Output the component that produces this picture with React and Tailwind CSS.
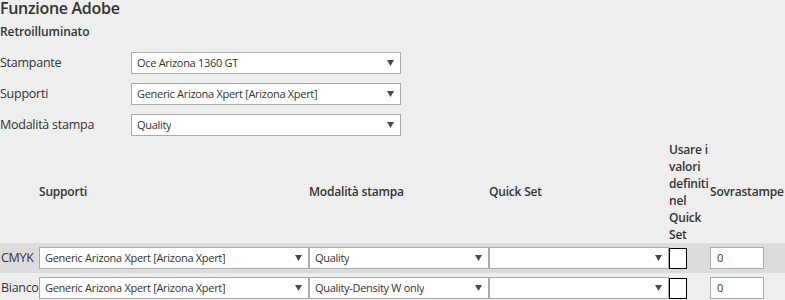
import React from 'react';

const font = { fontFamily: '"Open Sans", "Noto Sans", sans-serif' };

const Arrow = () => (
  <svg width="7" height="6" viewBox="0 0 7 6" className="shrink-0">
    <polygon points="0,0 7,0 3.5,6" fill="#4a4a4a" />
  </svg>
);

const FakeSelect = ({ value, width }) => (
  <div className={`flex h-[22px] shrink-0 items-center justify-between border border-[#a9a9a9] bg-white pl-[5px] pr-[6px] ${width}`}>
    <span className="truncate text-[11px] tracking-[-0.3px] text-[#333]">{value}</span>
    <Arrow />
  </div>
);

const FormRow = ({ label, value }) => (
  <div className="flex h-[22px] items-center">
    <span className="w-[131px] shrink-0 text-[12.5px] tracking-[-0.25px] text-[#333]">{label}</span>
    <FakeSelect value={value} width="w-[270px]" />
  </div>
);

const TableRow = ({ label, media, mode, band }) => (
  <div className={`flex h-[30px] items-center ${band ? 'bg-[#dcdcdc]' : ''}`}>
    <span className="w-[39px] shrink-0 pl-px text-[12.5px] tracking-[-0.3px] text-[#333]">{label}</span>
    <FakeSelect value={media} width="w-[270px]" />
    <FakeSelect value={mode} width="w-[180px]" />
    <FakeSelect value="" width="w-[180px]" />
    <div className="w-[41px] shrink-0">
      <div className="h-[21px] w-[18px] border border-black bg-white" />
    </div>
    <div className="flex h-[22px] w-[54px] shrink-0 items-center border border-[#a9a9a9] bg-white pl-[6px] text-[11px] text-[#333]">
      0
    </div>
  </div>
);

export default function App() {
  return (
    <div className="h-[300px] w-[785px] overflow-hidden bg-[#eeeeee] text-[#333]" style={font}>
      <h2 className="-mt-[2px] text-[16px] font-semibold leading-[20px] tracking-[-0.3px]">Funzione Adobe</h2>
      <h3 className="mt-[5px] text-[12px] font-semibold leading-[17px] tracking-[-0.1px]">Retroilluminato</h3>
      <div className="mt-[12px] flex flex-col gap-[9px]">
        <FormRow label="Stampante" value="Oce Arizona 1360 GT" />
        <FormRow label="Supporti" value="Generic Arizona Xpert [Arizona Xpert]" />
        <FormRow label="Modalità stampa" value="Quality" />
      </div>

      <div className="mt-[5px] flex h-[102px] items-center text-[12px] font-semibold tracking-[-0.2px]">
        <div className="w-[39px] shrink-0" />
        <div className="w-[270px] shrink-0">Supporti</div>
        <div className="w-[180px] shrink-0">Modalità stampa</div>
        <div className="w-[180px] shrink-0">Quick Set</div>
        <div className="w-[41px] shrink-0 whitespace-nowrap leading-[17px]">
          Usare i<br />valori<br />definiti<br />nel<br />Quick<br />Set
        </div>
        <div className="shrink-0">Sovrastampe</div>
      </div>

      <TableRow label="CMYK" media="Generic Arizona Xpert [Arizona Xpert]" mode="Quality" band />
      <TableRow label="Bianco" media="Generic Arizona Xpert [Arizona Xpert]" mode="Quality-Density W only" />
    </div>
  );
}
